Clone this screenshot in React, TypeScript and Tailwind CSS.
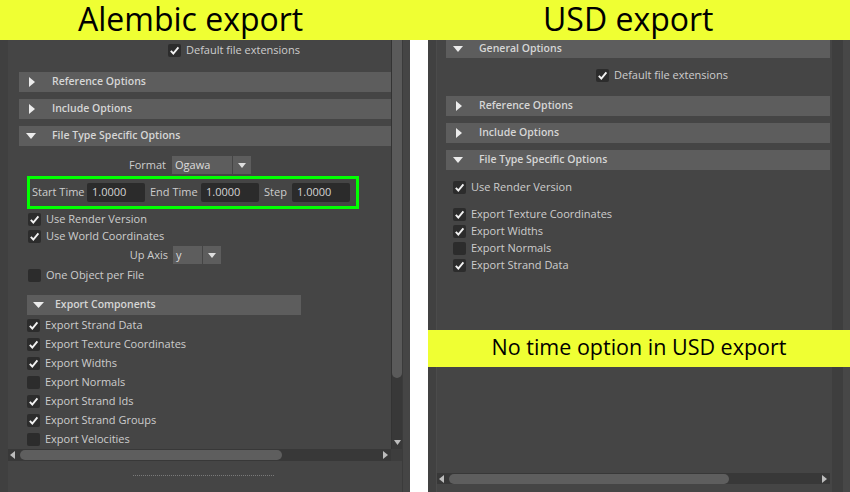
import React from 'react';

function TriRight() {
  return (
    <svg width="6" height="10" viewBox="0 0 6 10">
      <path d="M0 0 L6 5 L0 10Z" fill="#ececec" />
    </svg>
  );
}

function TriDown({ w = 10, h = 6 }: { w?: number; h?: number }) {
  return (
    <svg width={w} height={h} viewBox={`0 0 ${w} ${h}`}>
      <path d={`M0 0 H${w} L${w / 2} ${h}Z`} fill="#ececec" />
    </svg>
  );
}

function CheckBox({ on }: { on: boolean }) {
  return (
    <span className="flex h-[13px] w-[13px] shrink-0 items-center justify-center rounded-[2px] bg-[#2c2c2c]">
      {on && (
        <svg width="11" height="11" viewBox="0 0 11 11">
          <path d="M1.8 5.9 4.3 8.5 9.4 2.3" fill="none" stroke="#f2f2f2" strokeWidth="1.9" />
        </svg>
      )}
    </span>
  );
}

function CheckRow({ label, on, cls }: { label: string; on: boolean; cls: string }) {
  return (
    <div className={`flex items-center gap-[5px] text-[11px] text-[#cdcdcd] ${cls}`}>
      <CheckBox on={on} />
      <span>{label}</span>
    </div>
  );
}

function Section({ title, open, cls = '' }: { title: string; open: boolean; cls?: string }) {
  return (
    <div className={`flex h-5 items-center bg-[#5d5d5d] ${cls}`}>
      <span className="ml-[7px] flex w-[26px] items-center">
        {open ? (
          <TriDown />
        ) : (
          <span className="ml-[3px] flex">
            <TriRight />
          </span>
        )}
      </span>
      <span className="text-[10.5px] font-semibold text-[#d6d6d6]">{title}</span>
    </div>
  );
}

function Combo({ value, cls }: { value: string; cls: string }) {
  return (
    <div className="flex h-[18px]">
      <span className={`flex items-center bg-[#5d5d5d] pl-[3px] text-[11px] text-[#dcdcdc] ${cls}`}>{value}</span>
      <span className="ml-px flex w-[18px] items-center justify-center bg-[#5d5d5d]">
        <svg width="8" height="5" viewBox="0 0 8 5">
          <path d="M0 0 H8 L4 5Z" fill="#dedede" />
        </svg>
      </span>
    </div>
  );
}

function Field({ value }: { value: string }) {
  return (
    <span className="flex h-[19px] w-[58px] items-center rounded-[2px] bg-[#2b2b2b] pl-[5px] text-[11px] text-[#d4d4d4]">
      {value}
    </span>
  );
}

function HScroll({ thumb, cls }: { thumb: string; cls: string }) {
  return (
    <div className={`flex items-center bg-[#383838] ${cls}`}>
      <span className="ml-[2px] flex">
        <svg width="5" height="8" viewBox="0 0 5 8">
          <path d="M5 0 V8 L0 4Z" fill="#bdbdbd" />
        </svg>
      </span>
      <span className={`ml-[5px] h-[10px] rounded-[5px] bg-[#5e5e5e] ${thumb}`} />
      <span className="flex-1" />
      <span className="mr-[3px] flex">
        <svg width="5" height="8" viewBox="0 0 5 8">
          <path d="M0 0 V8 L5 4Z" fill="#bdbdbd" />
        </svg>
      </span>
    </div>
  );
}

function AlembicPanel() {
  return (
    <div className="flex h-[452px] w-[410px] shrink-0 bg-[#454545]">
      <div className="w-[8px] bg-[#404040]" />
      <div className="flex w-[394px] flex-col">
        <div className="flex h-[409px]">
          <div className="flex w-[383px] flex-col pl-[11px] pt-[2px]">
            <CheckRow label="Default file extensions" on cls="ml-[149px] h-[16px]" />
            <Section title="Reference Options" open={false} cls="mt-[14px]" />
            <Section title="Include Options" open={false} cls="mt-[7px]" />
            <Section title="File Type Specific Options" open cls="mt-[7px]" />

            <div className="mt-[10px] flex h-[18px] items-center">
              <span className="w-[147px] text-right text-[11px] text-[#cdcdcd]">Format</span>
              <span className="ml-[6px]">
                <Combo value="Ogawa" cls="w-[60px]" />
              </span>
            </div>

            <div className="mt-[2px] ml-[8px] flex h-[33px] w-[332px] items-center border-[3px] border-[#00ff00] text-[11px] text-[#cdcdcd]">
              <span className="w-[57px] pl-[2px]">Start Time</span>
              <Field value="1.0000" />
              <span className="w-[56px] pl-[5px]">End Time</span>
              <Field value="1.0000" />
              <span className="w-[33px] pl-[5px]">Step</span>
              <Field value="1.0000" />
            </div>

            <CheckRow label="Use Render Version" on cls="mt-[2px] ml-[9px] h-[17px]" />
            <CheckRow label="Use World Coordinates" on cls="ml-[9px] h-[17px]" />

            <div className="mt-[1px] flex h-[18px] items-center">
              <span className="w-[149px] text-right text-[11px] text-[#cdcdcd]">Up Axis</span>
              <span className="ml-[5px]">
                <Combo value="y" cls="w-[29px]" />
              </span>
            </div>

            <CheckRow label="One Object per File" on={false} cls="mt-[3px] ml-[9px] h-[16px]" />

            <div className="mt-[12px] ml-[8px] flex h-5 w-[274px] items-center bg-[#5d5d5d]">
              <span className="ml-[6px] flex w-[22px]">
                <TriDown w={11} h={6} />
              </span>
              <span className="text-[10.5px] font-semibold text-[#d6d6d6]">Export Components</span>
            </div>

            <div className="mt-[1px] flex flex-col">
              <CheckRow label="Export Strand Data" on cls="ml-[8px] h-[19px]" />
              <CheckRow label="Export Texture Coordinates" on cls="ml-[8px] h-[19px]" />
              <CheckRow label="Export Widths" on cls="ml-[8px] h-[19px]" />
              <CheckRow label="Export Normals" on={false} cls="ml-[8px] h-[19px]" />
              <CheckRow label="Export Strand Ids" on cls="ml-[8px] h-[19px]" />
              <CheckRow label="Export Strand Groups" on cls="ml-[8px] h-[19px]" />
              <CheckRow label="Export Velocities" on={false} cls="ml-[8px] h-[19px]" />
            </div>
          </div>

          {/* vertical scrollbar */}
          <div className="flex w-[11px] flex-col border-l border-[#333333] bg-[#383838]">
            <div className="h-[338px] rounded-b-[5px] bg-[#5a5a5a]" />
            <div className="flex-1" />
            <div className="mb-[3px] flex h-[8px] items-center justify-center">
              <svg width="7" height="5" viewBox="0 0 7 5">
                <path d="M0 0 H7 L3.5 5Z" fill="#bdbdbd" />
              </svg>
            </div>
          </div>
        </div>

        <div className="flex h-[12px]">
          <HScroll thumb="w-[262px]" cls="w-[383px]" />
          <div className="w-[11px] bg-[#3d3d3d]" />
        </div>

        <div className="flex-1 pt-[14px]">
          <div className="ml-[125px] w-[141px] border-t border-dotted border-[#7a7a7a]" />
        </div>
      </div>
      <div className="w-[8px] border-l border-[#3b3b3b] bg-[#454545]" />
    </div>
  );
}

function UsdPanel() {
  return (
    <div className="relative flex h-[452px] flex-1 bg-[#454545]">
      <div className="w-[9px] border-r border-[#4b4b4b] bg-[#414141]" />
      <div className="flex w-[395px] flex-col">
        <div className="flex flex-col pl-[9px] pr-[2px]">
          <div className="flex h-[18px] items-center bg-[#5d5d5d]">
            <span className="ml-[7px] flex w-[26px]">
              <TriDown />
            </span>
            <span className="text-[10.5px] font-semibold text-[#d6d6d6]">General Options</span>
          </div>
          <CheckRow label="Default file extensions" on cls="mt-[9px] ml-[150px] h-[16px]" />
          <Section title="Reference Options" open={false} cls="mt-[13px]" />
          <Section title="Include Options" open={false} cls="mt-[7px]" />
          <Section title="File Type Specific Options" open cls="mt-[7px]" />
          <CheckRow label="Use Render Version" on cls="mt-[9px] ml-[7px] h-[17px]" />
          <div className="mt-[10px] flex flex-col">
            <CheckRow label="Export Texture Coordinates" on cls="ml-[7px] h-[17px]" />
            <CheckRow label="Export Widths" on cls="ml-[7px] h-[17px]" />
            <CheckRow label="Export Normals" on={false} cls="ml-[7px] h-[17px]" />
            <CheckRow label="Export Strand Data" on cls="ml-[7px] h-[17px]" />
          </div>
        </div>
        <div className="flex-1" />
        <HScroll thumb="w-[280px]" cls="h-[11px] mr-[2px]" />
        <div className="h-[8px]" />
      </div>
      <div className="w-[11px] bg-[#3e3e3e]" />
      <div className="flex-1 bg-[#474747]" />

      {/* note band laid over the empty part of the panel */}
      <div className="absolute left-0 right-0 top-[290px] h-[37px] bg-[#efff33] text-center text-[21.5px] leading-[33px] text-black">
        No time option in USD export
      </div>
    </div>
  );
}

export default function App() {
  return (
    <div className="h-[492px] w-[850px] overflow-hidden bg-white font-['Open_Sans',sans-serif]">
      <div className="flex h-[40px] items-start bg-[#efff33] pt-[3px] text-[32px] leading-none text-black">
        <span className="w-[428px] pl-[78px]">Alembic export</span>
        <span className="pl-[115px]">USD export</span>
      </div>
      <div className="flex">
        <AlembicPanel />
        <div className="w-[18px] shrink-0 bg-white" />
        <UsdPanel />
      </div>
    </div>
  );
}
